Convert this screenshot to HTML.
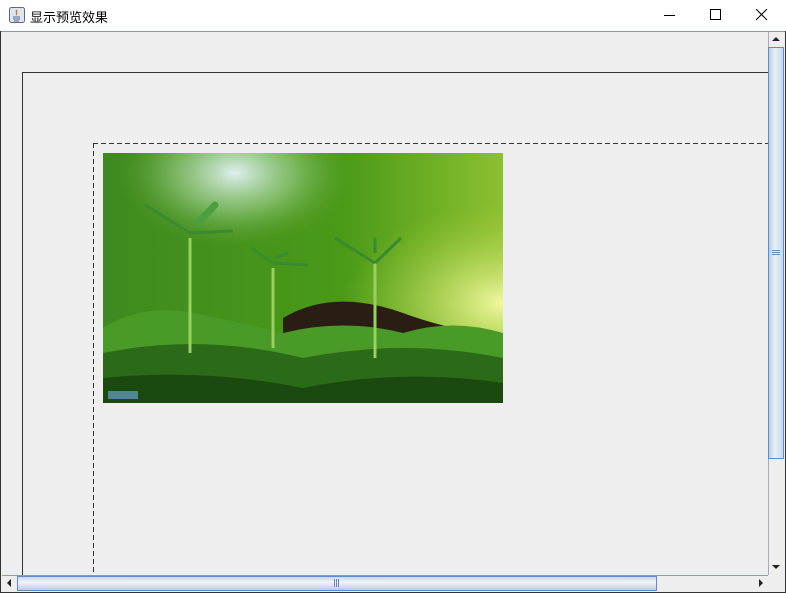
<!DOCTYPE html>
<html><head><meta charset="utf-8"><style>
*{margin:0;padding:0;box-sizing:border-box}
body{width:786px;height:593px;overflow:hidden;background:#fff;font-family:"Liberation Sans","Noto Sans CJK SC",sans-serif;position:relative}
.win{position:absolute;left:0;top:0;width:786px;height:593px;border:1px solid #333}
.title{position:absolute;left:0;top:0;width:786px;height:31px;background:#fff}
.t{position:absolute;left:30px;top:7px;font-size:13px;color:#000}
.content{position:absolute;left:1px;top:31px;width:784px;height:561px;background:#eeeeee;border-top:1px solid #8899aa}
.abs{position:absolute}
</style></head><body>
<div class="win"></div>
<div class="title">
<svg class="abs" style="left:9px;top:7px" width="16" height="16"><rect x="0.5" y="0.5" width="15" height="15" rx="2" fill="#dde6f0" stroke="#667"/><path d="M8 3c-2 2 1 3-1 5" stroke="#e07020" fill="none" stroke-width="1.3"/><path d="M4 10h7M4 12h7M5 14h5" stroke="#4a6a9a"/></svg>
<div class="t">显示预览效果</div>
<svg class="abs" style="left:664px;top:9px" width="12" height="12"><path d="M0 6.5h11" stroke="#000"/></svg>
<svg class="abs" style="left:710px;top:9px" width="12" height="12"><rect x="0.5" y="0.5" width="10" height="10" fill="none" stroke="#000"/></svg>
<svg class="abs" style="left:756px;top:9px" width="12" height="12"><path d="M0 0L11 11M11 0L0 11" stroke="#000"/></svg>
</div>
<div class="content"></div>
<div class="abs" style="left:22px;top:72px;width:746px;height:503px;border-left:1px solid #333;border-top:1px solid #333"></div>
<div class="abs" style="left:93px;top:143px;width:675px;height:1px;background:repeating-linear-gradient(90deg,#333 0 5px,transparent 5px 8px)"></div>
<div class="abs" style="left:93px;top:143px;width:1px;height:432px;background:repeating-linear-gradient(180deg,#333 0 5px,transparent 5px 8px)"></div>
<svg class="abs" style="left:103px;top:153px" width="400" height="250">
<defs>
<linearGradient id="b" x1="0" y1="0" x2="1" y2="0"><stop offset="0" stop-color="#3e8a20"/><stop offset="0.6" stop-color="#4a9a18"/><stop offset="1" stop-color="#8cc030"/></linearGradient>
<radialGradient id="g" cx="0.33" cy="0.08" r="0.3"><stop offset="0" stop-color="#e0f0f0"/><stop offset="0.5" stop-color="#a0d090" stop-opacity="0.6"/><stop offset="1" stop-color="#60a030" stop-opacity="0"/></radialGradient>
<radialGradient id="g2" cx="1" cy="0.6" r="0.4"><stop offset="0" stop-color="#f0f8a0"/><stop offset="1" stop-color="#a0c830" stop-opacity="0"/></radialGradient>
</defs>
<rect width="400" height="250" fill="url(#b)"/>
<rect width="400" height="250" fill="url(#g)"/>
<rect width="400" height="250" fill="url(#g2)"/>
<path d="M180 165 Q230 135 300 160 Q340 175 400 185 V250 H180Z" fill="#2a1e14"/>
<path d="M0 175 Q40 150 90 160 Q140 170 180 180 Q240 165 300 180 Q350 165 400 180 V250 H0Z" fill="#4a9a28"/>
<path d="M0 200 Q100 180 200 205 Q300 185 400 205 V250 H0Z" fill="#2a6a18"/>
<path d="M0 225 Q100 215 200 235 Q300 215 400 230 V250 H0Z" fill="#1a4a10"/>
<path d="M87 200 V85 M170 195 V115 M272 205 V110" stroke="#9ad060" stroke-width="3"/>
<path d="M87 80 L42 52 M87 80 L130 78" stroke="#3a8a30" stroke-width="3"/>
<path d="M95 70 L112 52" stroke="#4aa040" stroke-width="7" stroke-linecap="round"/>
<path d="M170 110 L148 95 M170 110 L205 112 M172 105 L185 100" stroke="#3a8a30" stroke-width="3"/>
<path d="M272 110 L232 85 M272 110 L298 85 M272 100 L272 85" stroke="#3a8a30" stroke-width="3"/>
<rect x="5" y="238" width="30" height="8" fill="#6aa0d0" opacity="0.7"/>
</svg>
<div class="abs" style="left:768px;top:32px;width:17px;height:543px;background:#eeeeee;border-left:1px solid #aab"></div>
<div class="abs" style="left:768px;top:47px;width:16px;height:412px;background:linear-gradient(90deg,#b8cce4,#e8f0fa 40%,#c8d8ec);border:1px solid #6688cc"></div>
<svg class="abs" style="left:771px;top:35px" width="10" height="8"><path d="M1 6h8L5 2z" fill="#222"/></svg>
<svg class="abs" style="left:771px;top:563px" width="10" height="8"><path d="M1 2h8L5 6z" fill="#222"/></svg>
<svg class="abs" style="left:771px;top:250px" width="10" height="6"><path d="M1 .5h8M1 2.5h8M1 4.5h8" stroke="#6688bb"/></svg>
<div class="abs" style="left:2px;top:575px;width:766px;height:16px;background:#eeeeee;border-top:1px solid #8899bb"></div>
<div class="abs" style="left:17px;top:576px;width:640px;height:15px;background:linear-gradient(180deg,#c8d8ec,#f0f5fb 40%,#b8cce4);border:1px solid #6688cc"></div>
<svg class="abs" style="left:5px;top:578px" width="8" height="10"><path d="M6 1v8L2 5z" fill="#222"/></svg>
<svg class="abs" style="left:757px;top:578px" width="8" height="10"><path d="M2 1v8L6 5z" fill="#222"/></svg>
<svg class="abs" style="left:333px;top:578px" width="8" height="10"><path d="M1.5 1v8M3.5 1v8M5.5 1v8" stroke="#6688bb"/></svg>
<div class="abs" style="left:768px;top:575px;width:17px;height:16px;background:#eeeeee"></div>
</body></html>
